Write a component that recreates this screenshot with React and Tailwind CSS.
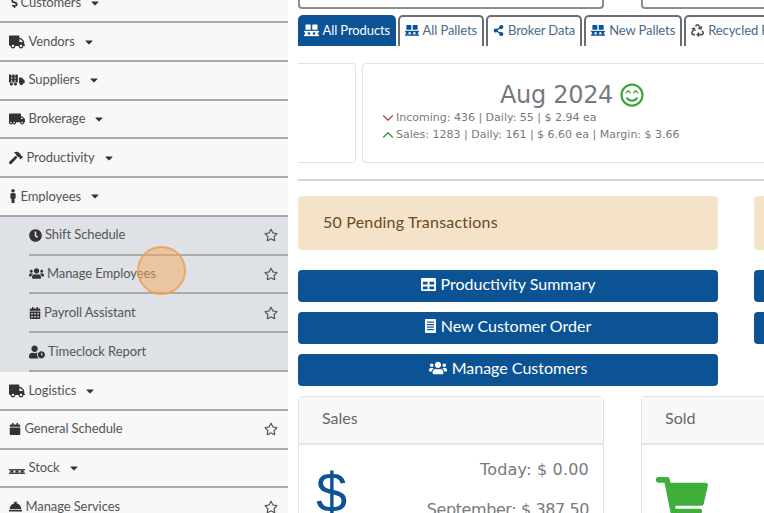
import React from "react";
import {
  FaTruck, FaTruckMoving, FaHammer, FaMale, FaClock, FaUsers, FaCalendarAlt,
  FaUserClock, FaCalendar, FaConciergeBell, FaRegStar, FaDollarSign, FaCaretDown, FaShareAlt,
  FaRecycle, FaTable, FaRegSmileBeam, FaShoppingCart,
} from "react-icons/fa";
import { LuChevronDown, LuChevronUp } from "react-icons/lu";

const PalletIcon = ({ className }) => (
  <svg viewBox="0 0 20 16" className={className} fill="currentColor">
    <rect x="2" y="0" width="7" height="7" rx="0.6" />
    <rect x="11" y="0" width="7" height="7" rx="0.6" />
    <rect x="0" y="8.5" width="20" height="2" />
    <rect x="0" y="13.5" width="20" height="2" />
    <rect x="1.5" y="10" width="3.5" height="4" />
    <rect x="8.2" y="10" width="3.5" height="4" />
    <rect x="15" y="10" width="3.5" height="4" />
  </svg>
);

const FlatPallet = ({ className }) => (
  <svg viewBox="0 0 20 6" className={className} fill="currentColor">
    <rect x="0" y="0" width="20" height="1.6" />
    <rect x="0" y="4.4" width="20" height="1.6" />
    <rect x="1.5" y="1.6" width="4" height="2.8" />
    <rect x="8" y="1.6" width="4" height="2.8" />
    <rect x="14.5" y="1.6" width="4" height="2.8" />
  </svg>
);

const ContainerTruck = ({ className }) => (
  <svg viewBox="0 0 20 14" className={className} fill="currentColor">
    <rect x="0" y="0" width="3" height="10" rx="0.5" />
    <rect x="4" y="0" width="3" height="10" rx="0.5" />
    <rect x="8" y="0" width="3" height="10" rx="0.5" />
    <rect x="0" y="2" width="11" height="1" />
    <rect x="0" y="6" width="11" height="1" />
    <path d="M12.5 4h3.5l3.5 3.5V11h-7z" />
    <circle cx="3" cy="12" r="2" />
    <circle cx="8" cy="12" r="2" />
    <circle cx="15.5" cy="11.5" r="2.2" />
  </svg>
);

const OrderIcon = () => (
  <svg viewBox="0 0 11 14" className="w-[11px] h-[14px]">
    <rect width="11" height="14" rx="0.8" fill="#fff" />
    <rect x="2" y="2.5" width="7" height="1.2" fill="#0b5394" />
    <rect x="2" y="5" width="7" height="1.2" fill="#0b5394" />
    <rect x="2" y="7.5" width="7" height="1.2" fill="#0b5394" />
    <rect x="2" y="10" width="7" height="1.2" fill="#0b5394" />
  </svg>
);

const Caret = () => <FaCaretDown className="text-[12px] text-[#333] ml-2" />;

const NavRow = ({ icon, label, caret, star }) => (
  <div className="h-[38.7px] shrink-0 flex items-center pl-[9px] pr-[10px] border-b-2 border-[#a9a9a9]">
    <span className="mr-[3.5px] text-[#333] flex items-center">{icon}</span>
    <span className="text-[13px] text-[#555] tracking-[-0.1px]">{label}</span>
    {caret && <Caret />}
    {star && <FaRegStar className="ml-auto text-[14px] text-[#555]" />}
  </div>
);

const SubRow = ({ icon, label, star }) => (
  <div className="h-[38.9px] flex items-center ml-[29px] pr-[10px] border-b-2 border-[#a9a9a9]">
    <span className="mr-[3px] text-[#333] flex items-center">{icon}</span>
    <span className="text-[13px] text-[#555] tracking-[-0.1px]">{label}</span>
    {star && <FaRegStar className="ml-auto text-[14px] text-[#555]" />}
  </div>
);

const Tab = ({ icon, label, active }) => (
  <div
    className={`h-[31px] shrink-0 flex items-center gap-[4px] rounded-t-[5px] text-[13px] tracking-[-0.1px] ${
      active
        ? "px-[5.5px] bg-[#0b5394] text-white"
        : "px-[5px] bg-white text-[#0b5394] border-2 border-b-0 border-[#6b6f73] pb-[2px]"
    }`}
  >
    {icon}
    <span className={active ? "text-white" : "text-[#4a6a88]"}>{label}</span>
  </div>
);

const BlueButton = ({ icon, label }) => (
  <div className="h-8 rounded-[4px] bg-[#0b5394] text-white flex items-center justify-center gap-[5px] pb-[4px] text-[16px]">
    {icon}
    {label}
  </div>
);

export default function App() {
  return (
    <div className="relative w-[764px] h-[513px] overflow-hidden flex bg-white font-['Lato','Open_Sans',sans-serif]">
      {/* sidebar */}
      <div className="w-[288px] shrink-0 h-[513px] overflow-hidden bg-[#f8f8f8] flex flex-col">
        <div className="-mt-[15.5px] flex flex-col">
          <NavRow icon={<FaDollarSign className="text-[11px] -mr-[3px]" />} label="Customers" caret />
          <NavRow icon={<FaTruck className="text-[16px]" />} label="Vendors" caret />
          <NavRow icon={<ContainerTruck className="w-[16px] h-[12px]" />} label="Suppliers" caret />
          <NavRow icon={<FaTruckMoving className="text-[16px]" />} label="Brokerage" caret />
          <NavRow icon={<FaHammer className="text-[14px]" />} label="Productivity" caret />
          <NavRow icon={<FaMale className="text-[14px] -mx-[3px]" />} label="Employees" caret />
          <div className="bg-[#dee2e6]">
            <SubRow icon={<FaClock className="text-[13px]" />} label="Shift Schedule" star />
            <SubRow icon={<FaUsers className="text-[15px]" />} label="Manage Employees" star />
            <SubRow icon={<FaCalendarAlt className="text-[12px]" />} label="Payroll Assistant" star />
            <SubRow icon={<FaUserClock className="text-[16px]" />} label="Timeclock Report" />
          </div>
          <NavRow icon={<FaTruck className="text-[16px]" />} label="Logistics" caret />
          <NavRow icon={<FaCalendar className="text-[12px]" />} label="General Schedule" star />
          <NavRow icon={<FlatPallet className="w-[16px] h-[5px] mt-[7px]" />} label="Stock" caret />
          <NavRow icon={<FaConciergeBell className="text-[13px]" />} label="Manage Services" star />
        </div>
      </div>

      {/* main */}
      <div className="ml-[10px] w-[466px] shrink-0 overflow-hidden">
        <div className="flex gap-[37px] h-[10px] -mt-px">
          <div className="w-[306px] shrink-0 border-2 border-t-0 border-[#8a8d90] rounded-b-[4px]" />
          <div className="w-[200px] shrink-0 border-2 border-t-0 border-[#8a8d90] rounded-b-[4px]" />
        </div>

        <div className="flex gap-[2px] mt-[6px]">
          <Tab active icon={<PalletIcon className="w-[15px] h-[13px]" />} label="All Products" />
          <Tab icon={<PalletIcon className="w-[14px] h-[13px]" />} label="All Pallets" />
          <Tab icon={<FaShareAlt className="text-[11px]" />} label="Broker Data" />
          <Tab icon={<PalletIcon className="w-[14px] h-[13px]" />} label="New Pallets" />
          <Tab icon={<FaRecycle className="text-[13px] text-[#555]" />} label="Recycled Pallets" />
        </div>

        <div className="flex gap-[6px] mt-[17px] h-[100px]">
          <div className="w-[58px] shrink-0 border border-[#e2e2e2] border-l-0 rounded-r-[4px]" />
          <div className="w-[500px] shrink-0 border border-[#e2e2e2] rounded-[4px] pt-[15px] pl-[20px] font-['DejaVu_Sans',sans-serif] text-[#757b80]">
            <div className="flex items-center justify-center w-[378px] gap-[7px] h-[31px]">
              <span className="text-[24px] tracking-[-0.3px]">Aug 2024</span>
              <FaRegSmileBeam className="text-[24px] text-[#3aa63a]" />
            </div>
            <div className="flex items-center gap-[4px] text-[11px] leading-[16px]">
              <LuChevronDown className="text-[18px] -mx-[4.5px] -my-[1px] stroke-[1.5] text-[#b0413e]" />
              <span>Incoming: 436 | Daily: 55 | $ 2.94 ea</span>
            </div>
            <div className="flex items-center gap-[4px] text-[11px] leading-[17px]">
              <LuChevronUp className="text-[18px] -mx-[4.5px] -my-[1px] stroke-[1.5] text-[#2e8b3d]" />
              <span>Sales: 1283 | Daily: 161 | $ 6.60 ea | Margin: $ 3.66</span>
            </div>
          </div>
        </div>

        <div className="h-[2px] bg-[#d4d4d4] mt-[16px]" />

        <div className="flex gap-[36px] mt-[15px]">
          <div className="w-[420px] shrink-0 flex flex-col">
            <div className="h-[54px] rounded-[4px] bg-[#f5e3c9] text-[#6b4a1e] text-[16px] tracking-[0.2px] pl-[25px] pt-[14px]">
              50 Pending Transactions
            </div>
            <div className="flex flex-col gap-[10px] mt-[20px]">
              <BlueButton icon={<FaTable className="text-[15px]" />} label="Productivity Summary" />
              <BlueButton icon={<OrderIcon />} label="New Customer Order" />
              <BlueButton icon={<FaUsers className="text-[18px]" />} label="Manage Customers" />
            </div>
          </div>
          <div className="w-[100px] shrink-0 flex flex-col">
            <div className="h-[54px] rounded-[4px] bg-[#f5e3c9]" />
            <div className="flex flex-col gap-[10px] mt-[20px]">
              <div className="h-8 rounded-[4px] bg-[#0b5394]" />
              <div className="h-8 rounded-[4px] bg-[#0b5394]" />
            </div>
          </div>
        </div>

        <div className="flex gap-[37px] mt-[10px]">
          <div className="w-[306px] shrink-0 h-[200px] border border-[#e2e2e2] rounded-[4px]">
            <div className="h-[48px] bg-[#f8f8f8] border-b-2 border-[#e6e6e6] flex items-center pl-[23px] pb-[4px] text-[16px] text-[#666]">Sales</div>
            <div className="flex justify-between pl-[17px] pr-[14px] pt-[13px]">
              <span className="text-[#0b5394] text-[56px] leading-none mt-[7px] font-['Liberation_Sans',sans-serif]">$</span>
              <div className="text-right text-[#757b80] text-[16px] font-['DejaVu_Sans',sans-serif] tracking-[0.2px]">
                <div className="leading-6">Today: $ 0.00</div>
                <div className="leading-6 mt-[16px] tracking-[-0.4px]">September: $ 387.50</div>
              </div>
            </div>
          </div>
          <div className="w-[200px] shrink-0 h-[200px] border border-[#e2e2e2] rounded-[4px]">
            <div className="h-[48px] bg-[#f8f8f8] border-b-2 border-[#e6e6e6] flex items-center pl-[23px] pb-[4px] text-[16px] text-[#666]">Sold</div>
            <FaShoppingCart className="text-[#3fae3a] text-[52px] mt-[29px] ml-[14px]" />
          </div>
        </div>
      </div>

      {/* click marker over the sidebar row */}
      <div className="absolute left-[137px] top-[246px] w-[49px] h-[49px] rounded-full bg-[#f4a860]/50 border-2 border-[#f0a050]/80" />
    </div>
  );
}
